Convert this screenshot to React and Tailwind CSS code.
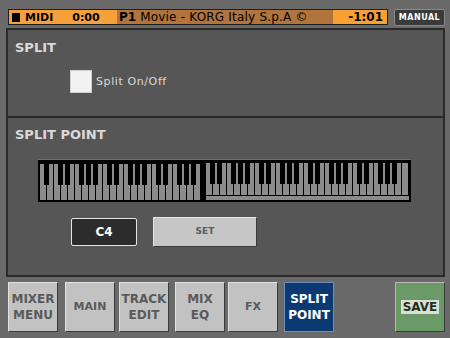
import React from "react";

// 88-key layout: A0..C8, split at C4 (white key 23)
const WHITE_COUNT = 52;
const SPLIT_AT = 23;
const NOTES = ["A", "B", "C", "D", "E", "F", "G"];

const Keyboard = () => {
  const pitch = 7;
  const whites = [];
  const blacks = [];
  for (let i = 0; i < WHITE_COUNT; i++) {
    const right = i >= SPLIT_AT;
    const x = right ? 168 + (i - SPLIT_AT) * pitch : 2 + i * pitch;
    whites.push(
      <rect key={"w" + i} x={x} y={right ? 4 : 5} width={6} height={right ? 32 : 36} fill="#8c8c8c" />
    );
    const n = NOTES[i % 7];
    const hasBlack = ["A", "C", "D", "F", "G"].includes(n) && i !== WHITE_COUNT - 1 && i !== SPLIT_AT - 1;
    if (hasBlack) {
      blacks.push(<rect key={"b" + i} x={x + 4} y={right ? 4 : 5} width={5} height={21} fill="#000" />);
    }
  }
  return (
    <svg width="373" height="43" viewBox="0 0 373 43">
      <rect x="0" y="0" width="373" height="43" fill="#000" />
      <rect x="0" y="0" width="373" height="1" fill="#6e6e6e" />
      <rect x="168" y="37" width="203" height="4" fill="#8c8c8c" />
      {whites}
      {blacks}
    </svg>
  );
};

const NavButton = ({ className, children }) => (
  <div
    className={
      "w-[50px] h-[50px] flex flex-col items-center justify-center text-center text-[12px] leading-[16px] font-bold border " +
      className
    }
  >
    {children}
  </div>
);

const GRAY = "bg-[#c2c2c2] text-[#5a5a5a] border-t-[#e2e2e2] border-l-[#e2e2e2] border-r-[#3a3a3a] border-b-[#3a3a3a]";

export default function App() {
  return (
    <div
      className="w-[450px] h-[338px] bg-[#6a6a6a] flex flex-col overflow-hidden"
      style={{ fontFamily: '"DejaVu Sans", "Liberation Sans", sans-serif' }}
    >
      {/* Top status bar */}
      <div className="h-[28px] pt-[9px] pl-[8px] flex items-start">
        <div className="w-[380px] h-[16px] border border-[#1e1e1e] flex text-black">
          <div className="w-[108px] bg-[#f5a03a] flex items-center pl-[3px]">
            <span className="w-[8px] h-[9px] bg-black mr-[5px]" />
            <span className="text-[11px] font-bold leading-none">MIDI</span>
            <span className="text-[11px] font-bold leading-none ml-[19px]">0:00</span>
          </div>
          <div className="w-[216px] bg-[#b0743c] flex items-center pl-[2px] whitespace-nowrap overflow-hidden">
            <span className="text-[12px] font-bold leading-none">P1</span>
            <span className="text-[12px] leading-none ml-[4px] tracking-[0.2px]">Movie - KORG Italy S.p.A ©</span>
          </div>
          <div className="flex-1 bg-[#f7a033] flex items-center justify-end pr-[4px]">
            <span className="text-[12px] font-bold leading-none">-1:01</span>
          </div>
        </div>
        <div className="ml-[6px] w-[51px] h-[17px] bg-[#3a3a3a] border border-[#8a8a8a] rounded-[2px] flex items-center justify-center text-white text-[8px] font-bold tracking-[0.5px] leading-none">
          MANUAL
        </div>
      </div>

      {/* Main panel */}
      <div className="ml-[6px] w-[439px] h-[249px] bg-[#565656] border-2 border-[#2a2a2a] flex flex-col text-[#dadada]">
        <div className="h-[88px] border-b-2 border-[#2a2a2a] pl-[7px] pt-[11px] flex flex-col">
          <div className="text-[13px] font-bold leading-[13px]">SPLIT</div>
          <div className="mt-[16px] ml-[55px] flex items-center">
            <div className="w-[22px] h-[23px] bg-[#f2f2f2] border border-[#cfcfcf]" />
            <span className="ml-[4px] text-[11px] leading-none tracking-[0.6px]">Split On/Off</span>
          </div>
        </div>
        <div className="flex-1 pl-[7px] pt-[10px] flex flex-col">
          <div className="text-[13px] font-bold leading-[13px]">SPLIT POINT</div>
          <div className="mt-[18px] ml-[23px]">
            <Keyboard />
          </div>
          <div className="mt-[15px] ml-[56px] flex items-center">
            <div className="w-[66px] h-[28px] bg-[#2c2c2c] border border-[#e6e6e6] rounded-[2px] flex items-center justify-center text-white text-[12px] font-bold">
              C4
            </div>
            <div className="ml-[16px] w-[104px] h-[30px] bg-[#c6c6c6] border border-t-[#e4e4e4] border-l-[#e4e4e4] border-r-[#3a3a3a] border-b-[#3a3a3a] flex items-center justify-center text-[#5c5c5c] text-[9px] font-bold">
              SET
            </div>
          </div>
        </div>
      </div>

      {/* Bottom buttons */}
      <div className="pt-[5px] flex items-start">
        <NavButton className={"ml-[8px] " + GRAY}>
          <span>MIXER</span>
          <span>MENU</span>
        </NavButton>
        <NavButton className={"ml-[7px] " + GRAY}>
          <span className="text-[11px]">MAIN</span>
        </NavButton>
        <NavButton className={"ml-[4px] " + GRAY}>
          <span>TRACK</span>
          <span>EDIT</span>
        </NavButton>
        <NavButton className={"ml-[6px] " + GRAY}>
          <span>MIX</span>
          <span>EQ</span>
        </NavButton>
        <NavButton className={"ml-[3px] " + GRAY}>
          <span className="text-[11px]">FX</span>
        </NavButton>
        <NavButton className="ml-[6px] bg-[#0b3a72] text-white border-[#6f8fb8]">
          <span>SPLIT</span>
          <span>POINT</span>
        </NavButton>
        <NavButton className="ml-[61px] bg-[#6b9a68] text-[#1e2e1e] border-t-[#b8b8b8] border-l-[#b8b8b8] border-r-[#3a3a3a] border-b-[#3a3a3a]">
          <span className="bg-[#d8e0d6] px-[2px] leading-[14px]">SAVE</span>
        </NavButton>
      </div>
    </div>
  );
}
